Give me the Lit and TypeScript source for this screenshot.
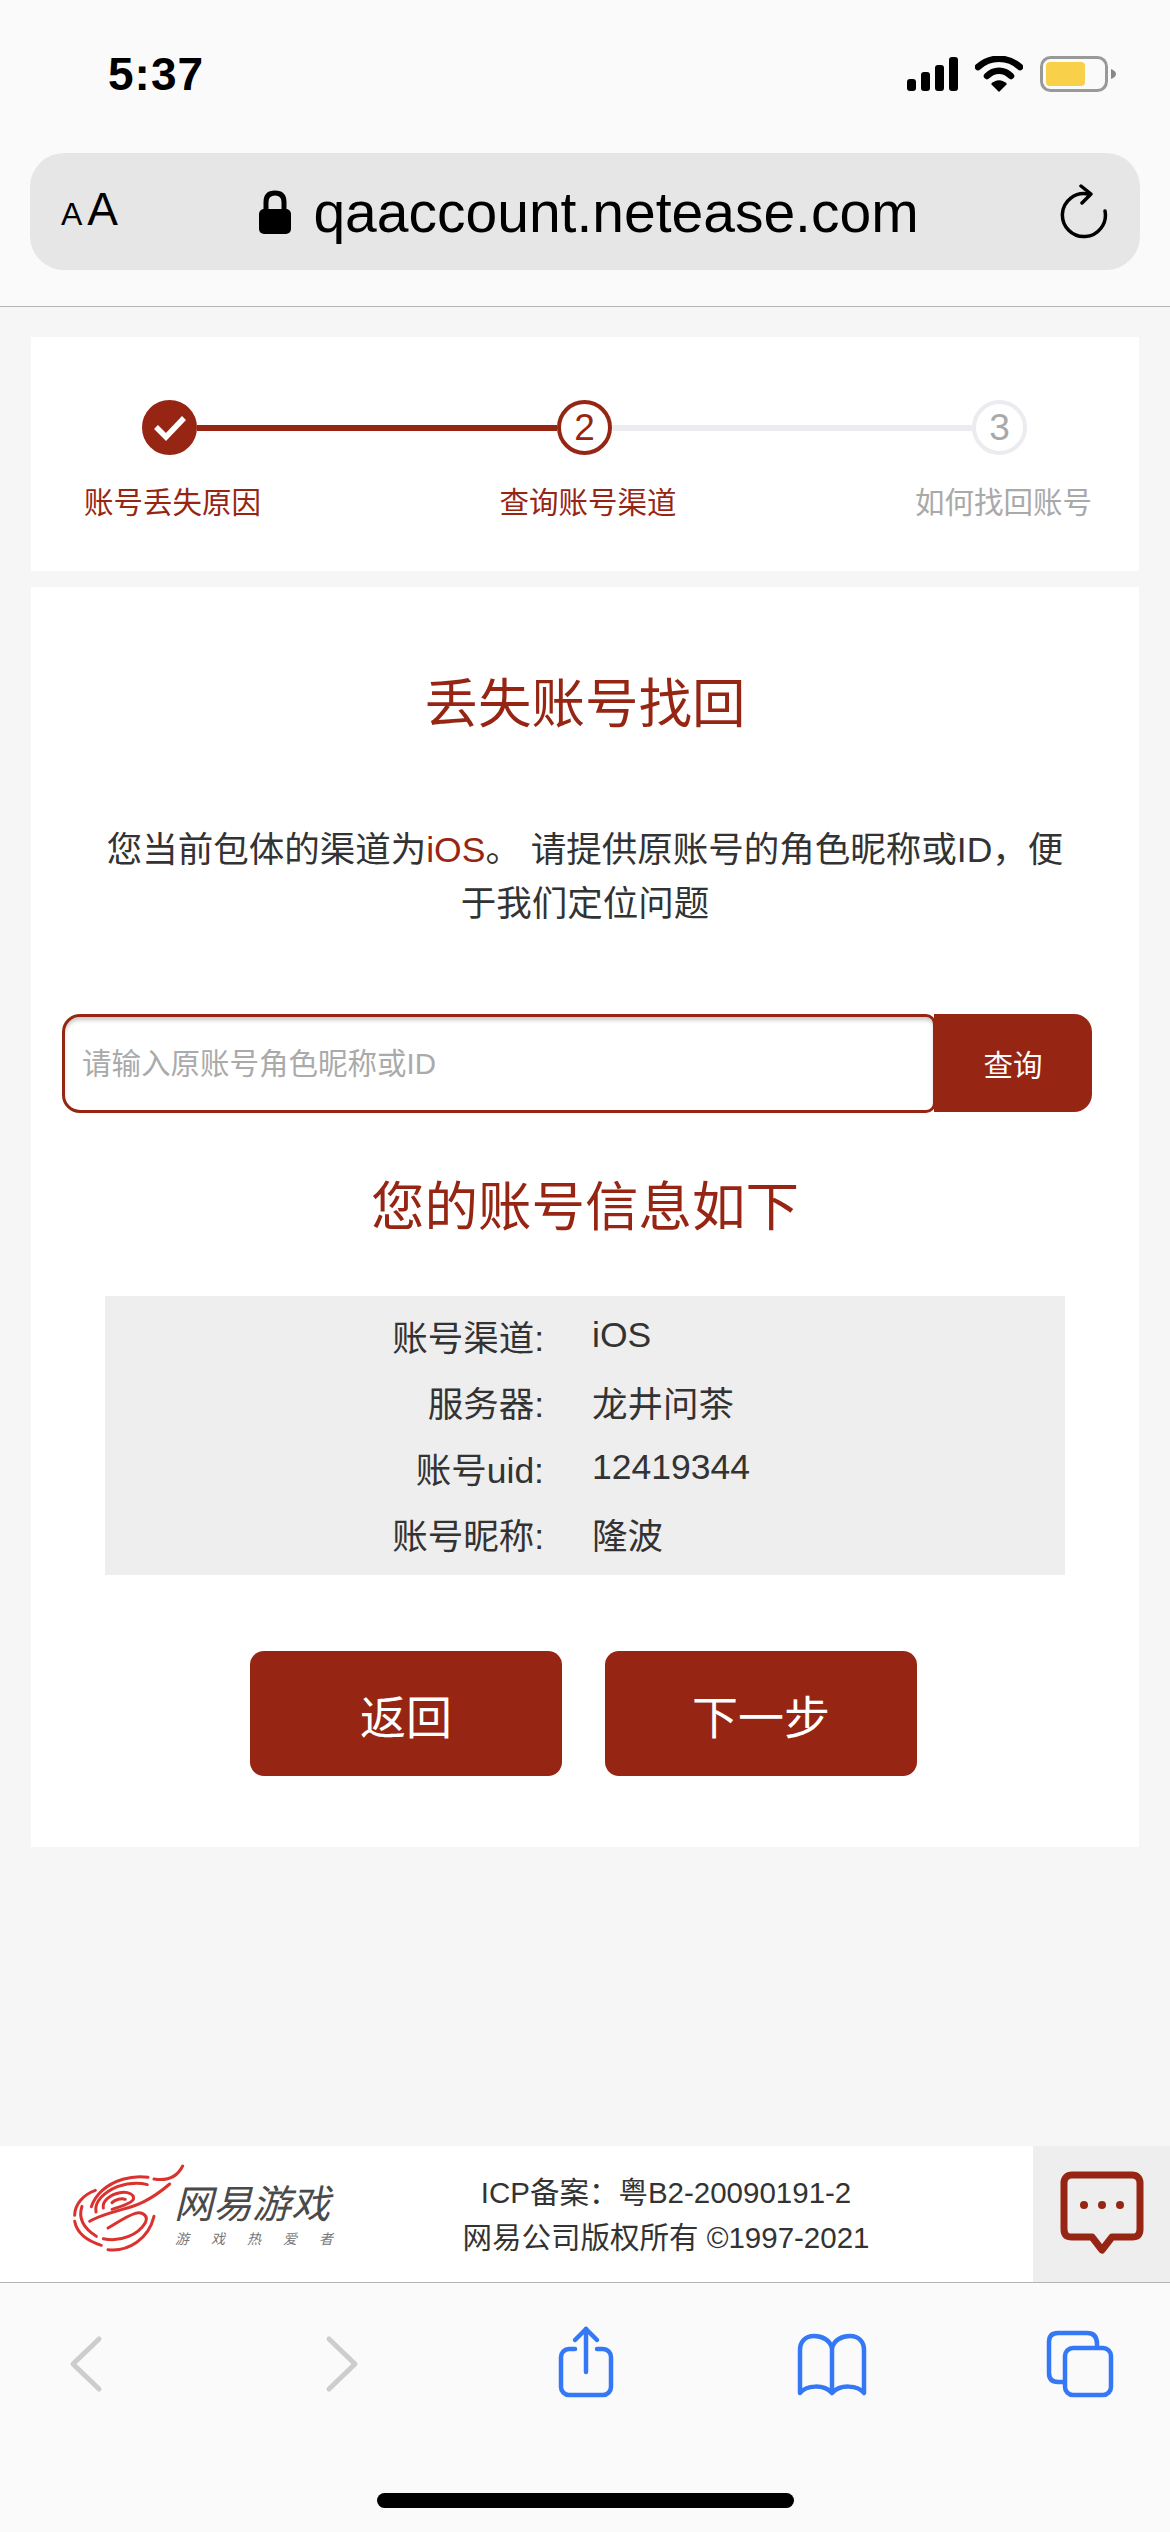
import { LitElement, html, css } from 'lit';
import { customElement } from 'lit/decorators.js';

const rows = [
  ['账号渠道:', 'iOS'],
  ['服务器:', '龙井问茶'],
  ['账号uid:', '12419344'],
  ['账号昵称:', '隆波'],
];

@customElement('app-root')
export class AppRoot extends LitElement {
  static styles = css`
    :host {
      display: block;
      width: 1170px;
      font-family: "Liberation Sans", "Noto Sans CJK SC", sans-serif;
      color: #333;
    }
    .page {
      display: flex;
      flex-direction: column;
      height: 2532px;
      background: #f6f6f6;
      overflow: hidden;
    }
    .chrome {
      height: 306px;
      box-sizing: border-box;
      background: #fafafa;
      border-bottom: 1px solid #b4b4b4;
      flex: none;
      box-sizing: content-box;
    }
    .status {
      height: 148px;
      padding: 0 54px 0 108px;
      display: flex;
      align-items: center;
      justify-content: space-between;
      margin-bottom: 5px;
    }
    .time {
      font-size: 46px;
      font-weight: 700;
      color: #000;
      letter-spacing: 1px;
    }
    .status-icons {
      display: flex;
      align-items: center;
      gap: 17px;
    }
    .status-icons svg {
      display: block;
    }
    .urlbar {
      height: 117px;
      margin: 0 30px;
      padding: 0 32px 0 31px;
      background: #e6e6e6;
      border-radius: 34px;
      display: flex;
      align-items: center;
      color: #000;
    }
    .aa {
      display: flex;
      align-items: baseline;
      gap: 5px;
      font-size: 46px;
      line-height: 50px;
    }
    .aa span {
      font-size: 32px;
    }
    .url {
      flex: 1;
      display: flex;
      align-items: center;
      justify-content: center;
      gap: 22px;
      font-size: 57px;
    }
    .card {
      background: #fff;
      margin: 0 31px;
      flex: none;
    }
    .steps {
      margin-top: 30px;
      height: 234px;
    }
    .track {
      display: flex;
      align-items: center;
      padding: 63px 112px 0 111px;
    }
    .dot {
      width: 55px;
      height: 55px;
      box-sizing: border-box;
      border-radius: 50%;
      border: 4px solid #962613;
      display: flex;
      align-items: center;
      justify-content: center;
      font-size: 37px;
      color: #962613;
      flex: none;
    }
    .dot.done {
      background: #962613;
    }
    .dot.todo {
      border-color: #ebebf0;
      color: #a9a9a9;
    }
    .line {
      flex: 1;
      height: 6px;
      background: #962613;
    }
    .line.todo {
      background: #ebebf0;
    }
    .labels {
      display: flex;
      justify-content: space-between;
      padding: 28px 47px 0 53px;
      font-size: 29.5px;
      line-height: 40px;
      color: #962613;
    }
    .labels .todo {
      color: #a9a9a9;
    }
    .main {
      margin-top: 16px;
      padding: 83px 0 71px;
    }
    h1 {
      margin: 0;
      font-size: 53.5px;
      line-height: 70px;
      font-weight: 400;
      text-align: center;
      color: #962613;
    }
    .intro {
      width: 980px;
      margin: 83px auto;
      font-size: 35.5px;
      line-height: 54px;
      text-align: center;
    }
    .intro em {
      font-style: normal;
      color: #962613;
    }
    .search {
      display: flex;
      margin: 0 47px 0 31px;
      height: 98px;
    }
    .search input {
      flex: 1;
      min-width: 0;
      height: 99px;
      box-sizing: border-box;
      margin: 0 -2px 0 0;
      padding: 0 0 0 17px;
      border: 3px solid #962613;
      border-radius: 18px 10px 10px 18px;
      outline: none;
      background: #fff;
      box-shadow: inset 0 4px 4px -1px rgba(0, 0, 0, 0.22);
      font: inherit;
      font-size: 29.5px;
      position: relative;
      z-index: 1;
    }
    .search input::placeholder {
      color: #aaa;
      opacity: 1;
    }
    .search button {
      width: 158px;
      border: 0;
      padding: 0;
      background: #962613;
      color: #fff;
      border-radius: 0 18px 18px 0;
      font: inherit;
      font-size: 29.5px;
    }
    h2 {
      margin: 61px 0 53px;
      font-size: 53.5px;
      line-height: 70px;
      font-weight: 400;
      text-align: center;
      color: #962613;
    }
    .info {
      margin: 0 74px;
      padding: 6px 0 9px;
      background: #eee;
      display: grid;
      grid-template-columns: 439px 1fr;
      column-gap: 48px;
      grid-auto-rows: 66px;
      align-items: center;
      font-size: 35.5px;
    }
    .info .key {
      text-align: right;
    }
    .actions {
      display: flex;
      justify-content: center;
      gap: 43px;
      margin-top: 76px;
      padding-right: 3px;
    }
    .actions button {
      width: 312px;
      height: 125px;
      border: 0;
      border-radius: 14px;
      background: #962613;
      color: #fff;
      font: inherit;
      font-size: 46px;
    }
    .grow {
      flex: 1;
    }
    .footer {
      height: 136px;
      flex: none;
      display: flex;
      background: #fff;
      border-bottom: 1px solid #b4b4b4;
    }
    .logo {
      width: 299px;
      flex: none;
      box-sizing: border-box;
      padding: 18px 0 0 72px;
      position: relative;
    }
    .logo svg {
      display: block;
    }
    .brand {
      position: absolute;
      left: 174px;
      top: 36px;
      font-size: 39px;
      line-height: 46px;
      color: #4a4a4a;
      white-space: nowrap;
      font-style: italic;
    }
    .slogan {
      position: absolute;
      left: 175px;
      top: 84px;
      width: 158px;
      display: flex;
      justify-content: space-between;
      font-size: 14px;
      line-height: 18px;
      color: #777;
      font-style: italic;
    }
    .legal {
      flex: 1;
      text-align: center;
      padding-top: 24px;
      font-size: 29.5px;
      line-height: 45px;
    }
    .chat {
      width: 137px;
      flex: none;
      background: #eee;
      padding: 25px 0 0 27px;
      box-sizing: border-box;
    }
    .chat svg {
      display: block;
    }
    .toolbar {
      flex: none;
      height: 249px;
      box-sizing: border-box;
      background: #fafafa;
      padding-top: 39px;
    }
    .tools {
      display: flex;
      justify-content: space-between;
      padding: 0 50px 0 46px;
    }
    .tools svg {
      display: block;
      fill: none;
      stroke: #3478f6;
      stroke-width: 4.5;
      stroke-linecap: round;
      stroke-linejoin: round;
    }
    .tools svg.off {
      stroke: #cdcdcd;
      stroke-width: 5;
    }
    .home {
      width: 417px;
      height: 15px;
      margin: 91px auto 0;
      border-radius: 8px;
      background: #000;
    }
  `;

  private renderFlame() {
    return html`<svg width="114" height="90" viewBox="92 68 342 270" fill="none" stroke="#d9322f" stroke-width="9" stroke-linecap="round">
      <path d="M424 74C410 102 382 120 338 113" />
      <path d="M320 108C270 100 215 118 182 148C166 163 156 178 150 196" />
      <path d="M162 147C125 160 100 190 100 222" />
      <path d="M100 240C106 272 135 298 180 312" />
      <path d="M200 325C262 332 322 292 338 225" />
      <path d="M122 195C112 225 122 258 165 285" />
      <path d="M186 292C240 304 292 278 312 244C322 224 304 210 282 216C255 224 225 246 200 260" />
      <path d="M145 240C170 225 205 215 240 205C280 195 325 180 385 128" />
      <path d="M164 212C158 180 190 152 228 136C252 128 286 122 318 130" />
      <path d="M186 200C182 180 205 160 235 154C262 150 280 160 276 174C270 186 238 196 212 204" />
      <path d="M212 184C222 174 240 170 252 174" />
    </svg>`;
  }

  render() {
    return html`
      <div class="page">
        <div class="chrome">
          <div class="status">
            <span class="time">5:37</span>
            <div class="status-icons">
              <svg width="51" height="34" viewBox="0 0 51 34" fill="#000">
                <rect x="0" y="22" width="9" height="12" rx="3" />
                <rect x="14" y="15" width="9" height="19" rx="3" />
                <rect x="28" y="8" width="9" height="26" rx="3" />
                <rect x="42" y="0" width="9" height="34" rx="3" />
              </svg>
              <svg width="48" height="36" viewBox="0 0 48 36">
                <path d="M3 11C15 0 33 0 45 11" fill="none" stroke="#000" stroke-width="6.5" stroke-linecap="round" />
                <path d="M12 20C19 13 29 13 36 20" fill="none" stroke="#000" stroke-width="6.5" stroke-linecap="round" />
                <path d="M16 28C21 23 27 23 32 28L24 36Z" fill="#000" />
              </svg>
              <svg width="76" height="36" viewBox="0 0 76 36">
                <rect x="1.5" y="1.5" width="65" height="33" rx="9" fill="none" stroke="#999" stroke-width="3" />
                <rect x="6" y="6" width="39" height="24" rx="4" fill="#f8d04a" />
                <path d="M71 13C74 14 76 16 76 18C76 20 74 22 71 23Z" fill="#888" />
              </svg>
            </div>
          </div>
          <div class="urlbar">
            <div class="aa"><span>A</span>A</div>
            <div class="url">
              <svg width="32" height="44" viewBox="0 0 32 44">
                <path d="M7 20V12C7 6 10 3 16 3C22 3 25 6 25 12V20" fill="none" stroke="#000" stroke-width="5" />
                <rect x="0" y="19" width="32" height="25" rx="5" fill="#000" />
              </svg>
              <span>qaaccount.netease.com</span>
            </div>
            <svg width="48" height="56" viewBox="0 0 48 56" fill="none" stroke="#000" stroke-width="3.5" stroke-linecap="round" stroke-linejoin="round">
              <path d="M28 10A21.5 21.5 0 1 0 45 27" />
              <path d="M21 2L31 10L22 19" />
            </svg>
          </div>
        </div>

        <div class="card steps">
          <div class="track">
            <div class="dot done">
              <svg width="34" height="26" viewBox="0 0 34 26" fill="none" stroke="#fff" stroke-width="5.5">
                <path d="M3 12L13 22L31 3" />
              </svg>
            </div>
            <div class="line"></div>
            <div class="dot">2</div>
            <div class="line todo"></div>
            <div class="dot todo">3</div>
          </div>
          <div class="labels">
            <span>账号丢失原因</span>
            <span>查询账号渠道</span>
            <span class="todo">如何找回账号</span>
          </div>
        </div>

        <div class="card main">
          <h1>丢失账号找回</h1>
          <p class="intro">您当前包体的渠道为<em>iOS</em>。 请提供原账号的角色昵称或ID，便于我们定位问题</p>
          <div class="search">
            <input type="text" placeholder="请输入原账号角色昵称或ID" />
            <button>查询</button>
          </div>
          <h2>您的账号信息如下</h2>
          <div class="info">
            ${rows.map(([k, v]) => html`<div class="key">${k}</div><div>${v}</div>`)}
          </div>
          <div class="actions">
            <button>返回</button>
            <button>下一步</button>
          </div>
        </div>

        <div class="grow"></div>

        <div class="footer">
          <div class="logo">
            ${this.renderFlame()}
            <div class="brand">网易游戏</div>
            <div class="slogan"><span>游</span><span>戏</span><span>热</span><span>爱</span><span>者</span></div>
          </div>
          <div class="legal">ICP备案：粤B2-20090191-2<br />网易公司版权所有 ©1997-2021</div>
          <div class="chat">
            <svg width="84" height="84" viewBox="0 0 84 84">
              <path d="M12 4H72C77 4 80 7 80 12V58C80 64 77 66 72 66H52L42 79L32 66H12C7 66 4 64 4 58V12C4 7 7 4 12 4Z" fill="none" stroke="#962613" stroke-width="7" stroke-linejoin="round" />
              <circle cx="24" cy="34" r="4" fill="#962613" />
              <circle cx="42" cy="34" r="4" fill="#962613" />
              <circle cx="60" cy="34" r="4" fill="#962613" />
            </svg>
          </div>
        </div>

        <div class="toolbar">
          <div class="tools">
            <svg class="off" width="80" height="80" viewBox="0 0 80 80"><path d="M53 17L27 42L53 67" /></svg>
            <svg class="off" width="80" height="80" viewBox="0 0 80 80"><path d="M34 17L60 42L34 67" /></svg>
            <svg width="80" height="80" viewBox="0 0 80 80">
              <path d="M32 27H26A8 8 0 0 0 18 35V65A8 8 0 0 0 26 73H60A8 8 0 0 0 68 65V35A8 8 0 0 0 60 27H54" />
              <path d="M43 50V7" />
              <path d="M32 18L43 7L54 18" />
            </svg>
            <svg width="80" height="80" viewBox="0 0 80 80">
              <path d="M40 26C38 18 30 14 22 14C13 14 8 20 8 28V71C14 63 32 62 40 71C48 62 66 63 72 71V28C72 20 67 14 58 14C50 14 42 18 40 26Z" />
              <path d="M40 26V68" />
            </svg>
            <svg width="80" height="80" viewBox="0 0 80 80">
              <rect x="25" y="26" width="46" height="47" rx="8" />
              <path d="M23 60H18C12 60 9 57 9 51V20C9 14 12 11 18 11H47C53 11 57 14 57 22V24" />
            </svg>
          </div>
          <div class="home"></div>
        </div>
      </div>
    `;
  }
}
